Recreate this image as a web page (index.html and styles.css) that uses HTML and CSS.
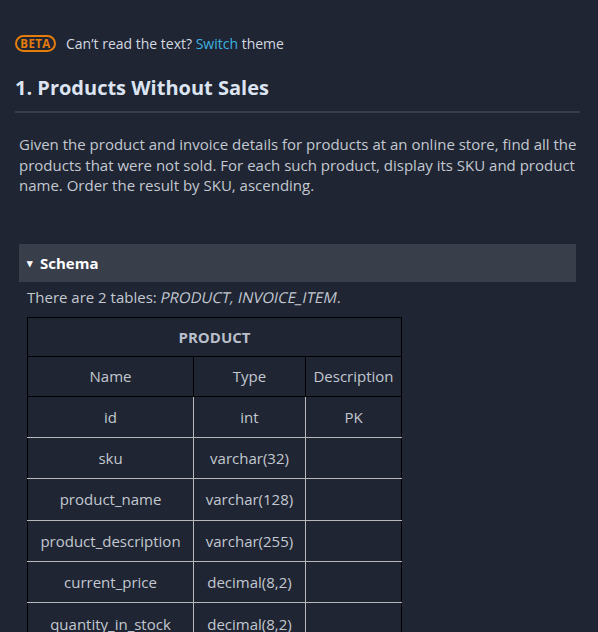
FILE: index.html
```html
<!DOCTYPE html>
<html>
<head>
<meta charset="utf-8">
<link rel="stylesheet" href="styles.css">
</head>
<body>
<div class="page">
  <div class="notice"><span class="beta">BETA</span><span>Can’t read the text? <a class="link">Switch</a> theme</span></div>
  <h1 class="title">1. Products Without Sales</h1>
  <p class="desc">Given the product and invoice details for products at an online store, find all the products that were not sold. For each such product, display its SKU and product name. Order the result by SKU, ascending.</p>
  <div class="schema-bar"><span class="tri">▾</span> Schema</div>
  <div class="schema-body">
    <p class="tables">There are 2 tables: <em class="obl">PRODUCT, INVOICE_ITEM</em>.</p>
    <table class="tbl">
      <thead>
        <tr><th class="cap" colspan="3">PRODUCT</th></tr>
        <tr><th class="c1">Name</th><th class="c2">Type</th><th class="c3">Description</th></tr>
      </thead>
      <tbody>
        <tr><td>id</td><td>int</td><td>PK</td></tr>
        <tr><td>sku</td><td>varchar(32)</td><td></td></tr>
        <tr><td>product_name</td><td>varchar(128)</td><td></td></tr>
        <tr><td>product_description</td><td>varchar(255)</td><td></td></tr>
        <tr><td>current_price</td><td>decimal(8,2)</td><td></td></tr>
        <tr><td>quantity_in_stock</td><td>decimal(8,2)</td><td></td></tr>
      </tbody>
    </table>
  </div>
</div>
</body>
</html>
```
FILE: styles.css
```css
html, body {
  margin: 0;
  padding: 0;
  background: #1f2532;
}
body {
  font-family: "Open Sans", sans-serif;
  color: #c9ced8;
  overflow: hidden;
}
.page {
  padding: 33px 18px 0 15px;
}
.notice {
  display: flex;
  align-items: center;
  gap: 10px;
  font-size: 14px;
  color: #d3d8e0;
  height: 20px;
}
.beta {
  display: inline-block;
  box-sizing: border-box;
  width: 41px;
  height: 17px;
  border: 2px solid #e47d0c;
  border-radius: 9px;
  color: #e47d0c;
  font-weight: 700;
  font-size: 11.5px;
  line-height: 13px;
  text-align: center;
  letter-spacing: 0.4px;
}
.link {
  color: #3cb3e2;
}
.title {
  margin: 21px 0 0;
  font-size: 20px;
  font-weight: 700;
  color: #dce4f1;
  line-height: 28px;
  padding-bottom: 9px;
  border-bottom: 2px solid #383d4a;
}
.desc {
  margin: 21px 0 0 4px;
  font-size: 15px;
  line-height: 20.5px;
  color: #c3c8d1;
}
.schema-bar {
  margin: 48px 4px 0 4px;
  height: 38px;
  background: #393e4b;
  display: flex;
  align-items: center;
  padding-left: 8px;
  font-weight: 700;
  font-size: 15px;
  color: #ffffff;
  gap: 7px;
}
.tri {
  font-size: 11px;
}
.schema-body {
  padding: 0 12px;
}
.tables {
  margin: 5px 0 0 0;
  font-size: 15px;
  line-height: 20px;
  color: #c3c8d1;
}
.obl {
  font-style: normal;
  display: inline-block;
  transform: skewX(-12deg);
}
.tbl {
  margin-top: 10px;
  border-collapse: collapse;
  border: 1px solid #000;
  font-size: 15px;
  color: #c3c8d1;
}
.tbl th {
  font-weight: 400;
  height: 39px;
  padding: 0;
  border: 1px solid #000;
}
.tbl th.cap {
  font-weight: 700;
  color: #b9bfca;
  height: 38px;
}
.c1 { width: 165px; }
.c2 { width: 111px; }
.c3 { width: 95px; }
.tbl td {
  height: 40.4px;
  padding: 0;
  text-align: center;
  border: 1px solid #b9b9b9;
}
.tbl tbody tr:first-child td {
  border-top-color: #000;
}
.tbl td:first-child { border-left-color: #000; }
.tbl td:last-child { border-right-color: #000; }
```
